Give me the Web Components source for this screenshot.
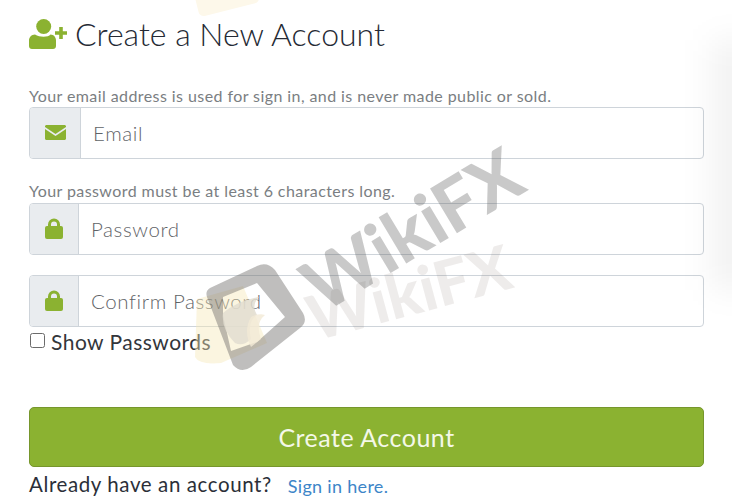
<!DOCTYPE html>
<html>
<head>
<meta charset="utf-8">
<title>Create a New Account</title>
<style>
html,body{margin:0;padding:0;background:#fff;overflow:hidden;}
body{width:732px;height:504px;position:relative;font-family:"Lato","Open Sans",sans-serif;}
</style>
</head>
<body>
<signup-form></signup-form>
<wiki-mark></wiki-mark>
<script>
const GREEN = '#8bb231';

class inputField extends HTMLElement{
    constructor(){
        super();
        this.attachShadow({mode: "open"});
    }
    getIcon(){
        if(this.getAttribute('icon') === 'mail'){
            return `<svg width="21" height="15" viewBox="0 0 21 15"><path fill="${GREEN}" d="M1.500 0h18C20.300 0 21 .7 21 1.500v.6l-10.500 6.900L0 2.100v-.6C0 .7.700 0 1.500 0z"/><path fill="${GREEN}" d="M0 4l10.500 6.900L21 4v9.500c0 .8-.7 1.500-1.500 1.500h-18C.7 15 0 14.300 0 13.500z"/></svg>`;
        }
        return `<svg width="18" height="21" viewBox="0 0 18 21"><path fill="${GREEN}" d="M3 9V6.500a6 6 0 0 1 12 0V9h-3V6.500a3 3 0 0 0-6 0V9z"/><rect fill="${GREEN}" x="0" y="8" width="18" height="13" rx="2"/></svg>`;
    }
    connectedCallback(){
        const addon = this.getAttribute('addon') || 49;
        const pad = this.getAttribute('pad') || 12;
        this.shadowRoot.innerHTML = `
            <style>
                :host{display:flex;height:52px;box-sizing:border-box;border:1px solid #ced4da;border-radius:4px;overflow:hidden;}
                .addon{width:${addon}px;flex:none;background:#e9ecef;border-right:1px solid #ced4da;display:flex;align-items:center;justify-content:center;padding-bottom:1px;box-sizing:border-box;}
                .box{flex:1;display:flex;align-items:center;padding-left:${pad}px;background:transparent;font-size:20.500px;color:#5f6367;font-weight:300;letter-spacing:.6px;}
            </style>
            <div class="addon">${this.getIcon()}</div>
            <div class="box"><slot></slot></div>
        `;
    }
}

class signupForm extends HTMLElement{
    constructor(){
        super();
        this.attachShadow({mode: "open"});
    }
    connectedCallback(){
        this.shadowRoot.innerHTML = `
            <style>
                :host{display:block;width:675px;margin-left:29px;padding-top:16px;color:#2b2f38;font-family:"Lato","Open Sans",sans-serif;}
                h1{margin:0;display:flex;align-items:center;gap:8px;font-size:32px;line-height:36px;font-weight:300;letter-spacing:0;color:#252a34;}
                .note{font-size:16px;line-height:20px;color:#7a7e82;letter-spacing:.42px;margin:0 0 1px;}
                .first{margin-top:34px;}
                .second{margin-top:22px;margin-bottom:2px;}
                input-field.third{margin-top:20px;}
                .show{display:flex;align-items:center;gap:6px;height:29px;margin-bottom:1px;font-size:21px;letter-spacing:.48px;color:#33363b;}
                .check{width:13px;height:13px;border:1.500px solid #6b6b6b;border-radius:2.500px;background:#fff;margin-left:1px;margin-bottom:3px;}
                .submit{margin-top:51px;height:60px;box-sizing:border-box;background:${GREEN};border:1px solid #76962c;border-radius:5px;color:#f4f8e8;font-size:25px;letter-spacing:.5px;display:flex;align-items:center;justify-content:center;padding-bottom:1px;}
                .foot{display:flex;align-items:center;height:34px;font-size:20.500px;letter-spacing:.6px;color:#2b2f38;}
                .foot a{color:#3d85c8;font-size:18px;letter-spacing:.3px;margin:3px 0 0 16px;text-decoration:none;}
            </style>
            <h1>
                <svg width="38" height="30" viewBox="0 0 38 30"><circle cx="14.700" cy="7.500" r="7.500" fill="${GREEN}"/><path fill="${GREEN}" d="M6 15.500c2.500 1.500 5.500 2.200 8.500 2.200s6-.7 7-2.200c3.300 0 5.500 2.800 5.500 6V27c0 1.700-1.300 3-3 3H3c-1.700 0-3-1.300-3-3v-5.500c0-3.200 2.500-6 6-6z"/><path fill="${GREEN}" d="M30.200 8h3.600v4.200H38v3.600h-4.200V20h-3.600v-4.200H26v-3.600h4.200z"/></svg>
                <span>Create a New Account</span>
            </h1>
            <p class="note first">Your email address is used for sign in, and is never made public or sold.</p>
            <input-field icon="mail" addon="51" pad="12">Email</input-field>
            <p class="note second">Your password must be at least 6 characters long.</p>
            <input-field icon="lock">Password</input-field>
            <input-field class="third" icon="lock">Confirm Password</input-field>
            <div class="show"><span class="check"></span><span>Show Passwords</span></div>
            <div class="submit">Create Account</div>
            <div class="foot"><span>Already have an account?</span><a href="#">Sign in here.</a></div>
        `;
    }
}

class wikiMark extends HTMLElement{
    constructor(){
        super();
        this.attachShadow({mode: "open"});
    }
    connectedCallback(){
        this.shadowRoot.innerHTML = `
            <style>
                :host{display:block;position:absolute;inset:0;pointer-events:none;overflow:hidden;font-family:"Lato","Open Sans",sans-serif;}
                .txt{position:absolute;font-weight:900;white-space:nowrap;transform-origin:0 100%;}
                .a{left:326px;top:249px;font-size:72px;line-height:72px;color:rgba(90,90,90,.33);transform:rotate(-31deg);}
                .b{left:316px;top:286px;font-size:62px;line-height:62px;color:rgba(120,105,100,.13);transform:rotate(-15deg);}
                .logo{position:absolute;left:185px;top:255px;}
                .blur{position:absolute;right:-30px;top:40px;width:50px;height:250px;background:rgba(0,0,0,.05);filter:blur(16px);}
                .top{position:absolute;left:196px;top:-14px;width:62px;height:24px;background:#fdf8ea;border-radius:5px;transform:rotate(-14deg);}
            </style>
            <div class="top"></div>
            <div class="blur"></div>
            <span class="txt b">WikiFX</span>
            <span class="txt a">WikiFX</span>
            <svg class="logo" width="135" height="125" viewBox="0 0 135 125">
                <path fill="#f6e6b4" opacity=".42" d="M12 44L58 31L82 88L36 108Q14 110 10 102z"/>
                <path fill-rule="evenodd" fill="#6e6a68" opacity=".44" d="M25 33L72 11Q82 6 90 15L118 58Q123 67 115 73L66 112Q56 119 48 110L22 42Q20 36 25 33zM38 42L72 28L100 62L72 87L46 96L38 60z"/>
                <path fill="#e2ddd0" opacity=".85" d="M38 58Q52 46 74 42Q66 50 72 60Q62 66 66 84Q58 92 50 88Q36 74 38 58z"/>
                <path fill="#f2ead6" opacity=".8" d="M66 62Q74 58 80 60Q70 68 76 84L66 92Q58 76 66 62z"/>
            </svg>
        `;
    }
}

customElements.define('input-field',inputField);
customElements.define('signup-form',signupForm);
customElements.define('wiki-mark',wikiMark);
</script>
</body>
</html>
